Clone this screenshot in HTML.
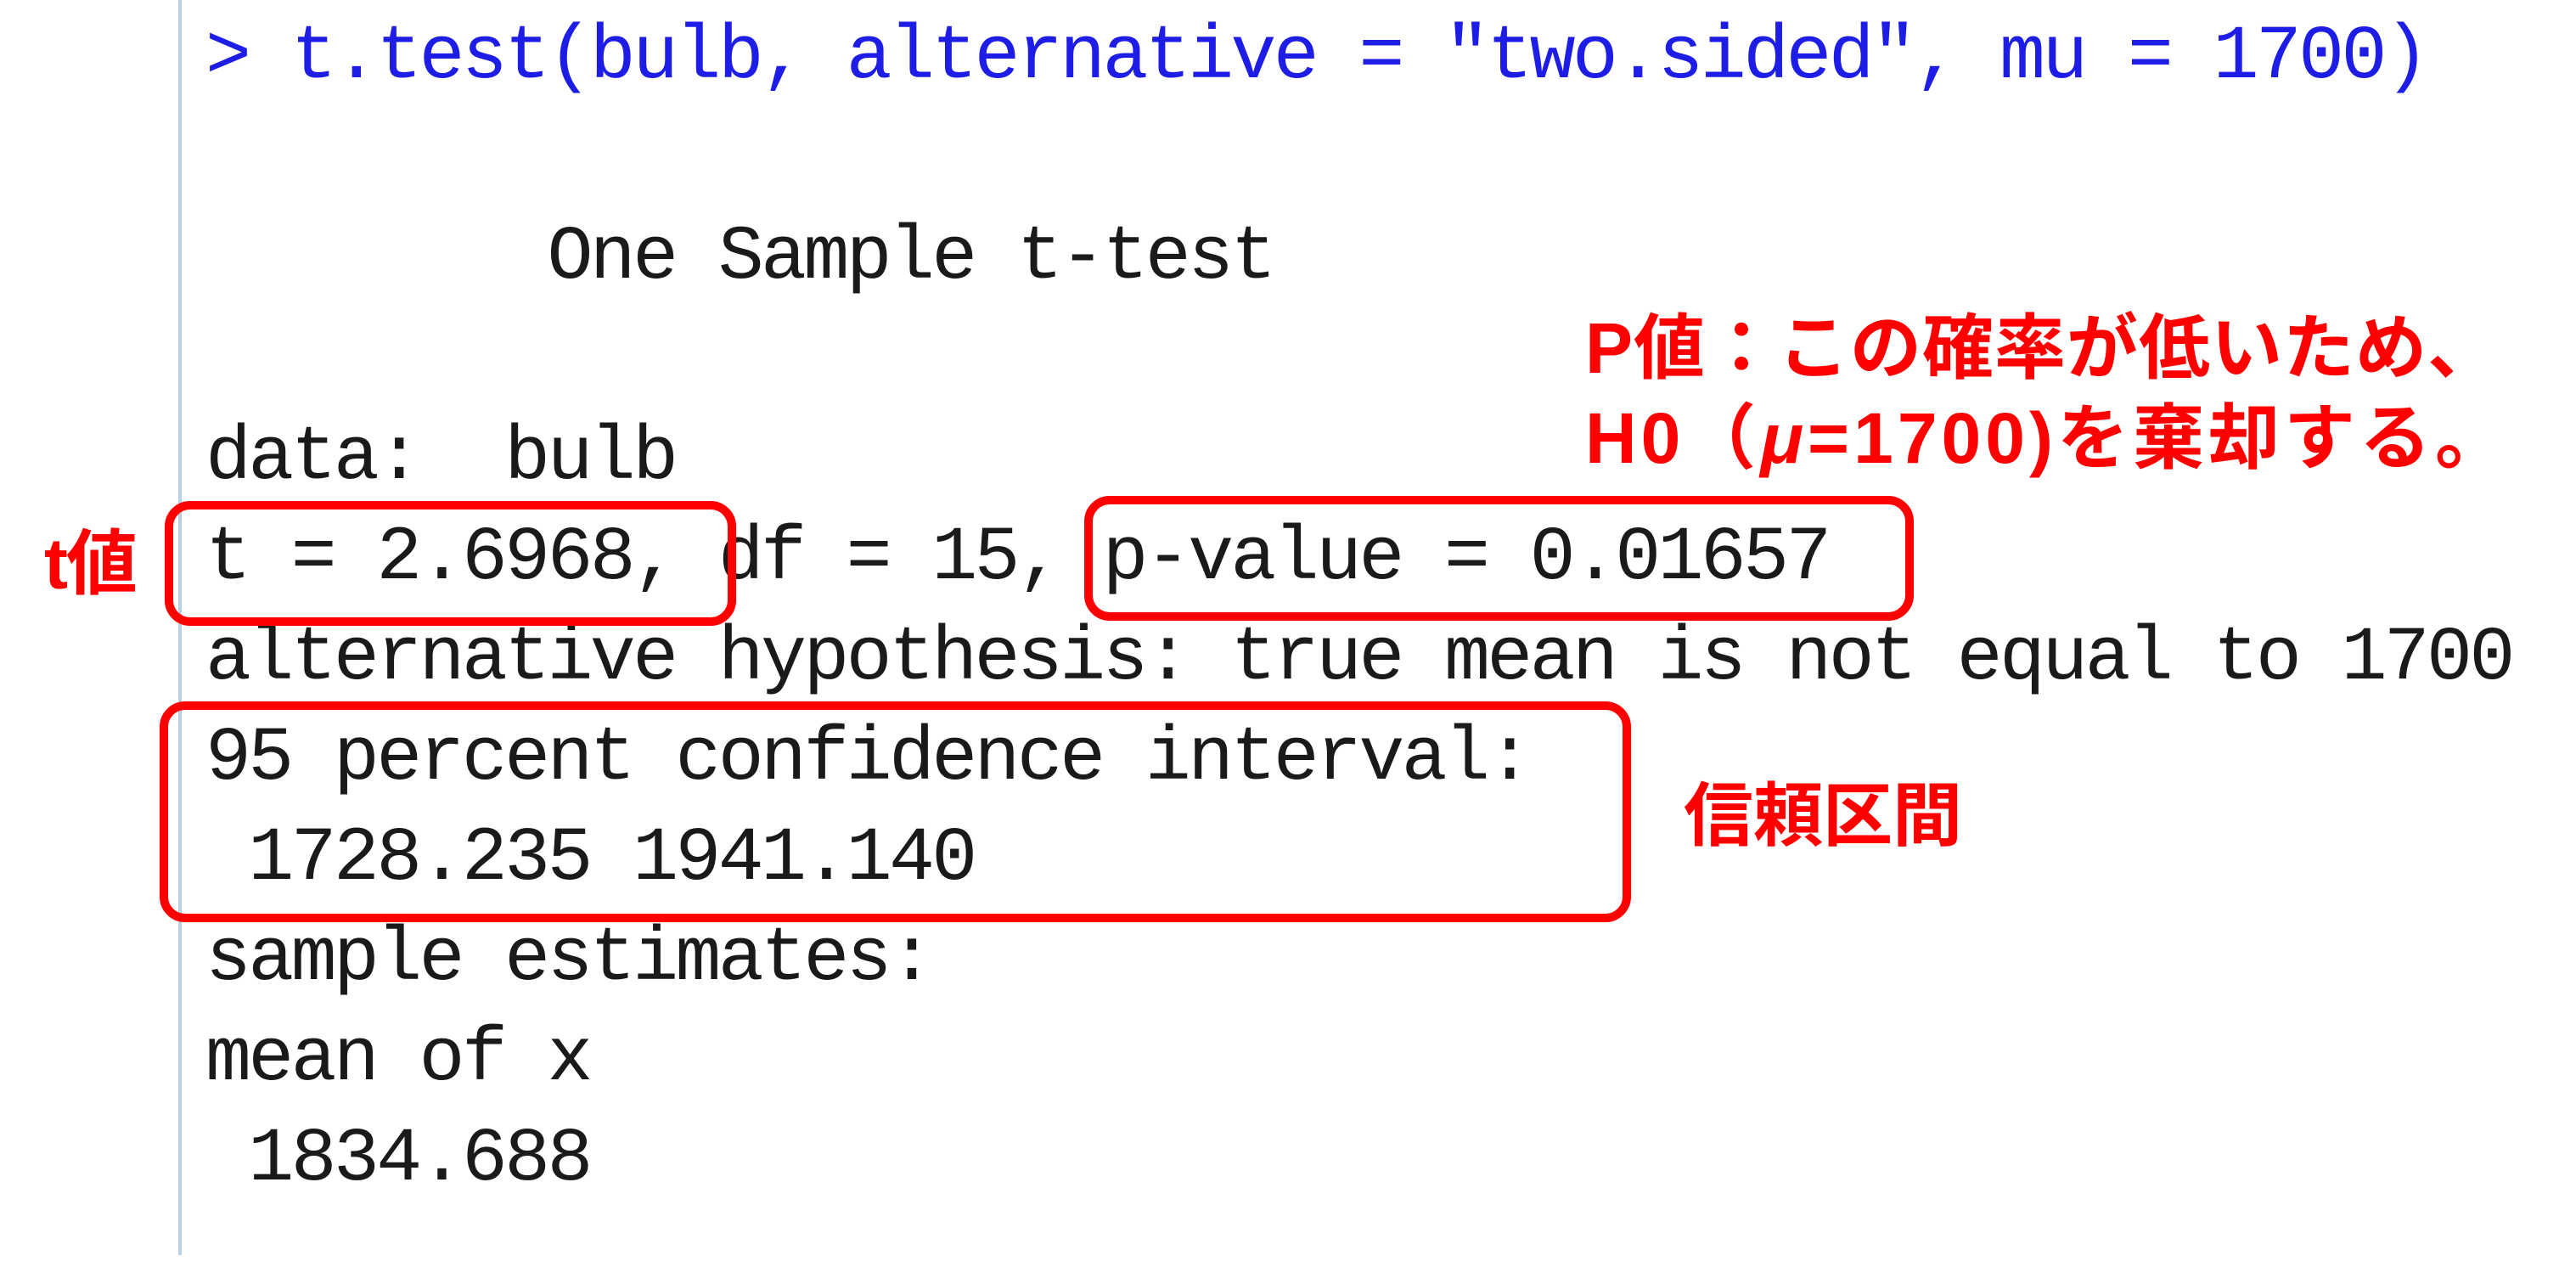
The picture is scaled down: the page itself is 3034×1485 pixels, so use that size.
<!DOCTYPE html>
<html><head><meta charset="utf-8"><style>
html,body{margin:0;padding:0;background:#fff;}
body{width:3034px;height:1485px;position:relative;overflow:hidden;}
.vl{position:absolute;left:210px;top:0;width:4px;height:1478px;background:#b9d0e3;}
.ln{position:absolute;left:242px;height:118px;line-height:118px;font-family:"Liberation Mono",monospace;font-size:90px;letter-spacing:-3.7px;color:#1a1a1a;white-space:pre;}
.blue{color:#1d1de6;}
.red{position:absolute;font-family:"Liberation Sans","Noto Sans CJK JP",sans-serif;font-weight:bold;color:#f00;white-space:pre;}
.box{position:absolute;border:10px solid #f00;border-radius:30px;box-sizing:border-box;}
</style></head><body>
<div class="vl"></div>
<div class="ln blue" style="top:9px">&gt; t.test(bulb, alternative = "two.sided", mu = 1700)</div>
<div class="ln" style="top:245px">        One Sample t-test</div>
<div class="ln" style="top:481px">data:  bulb</div>
<div class="ln" style="top:599px">t = 2.6968, df = 15, p-value = 0.01657</div>
<div class="ln" style="top:717px">alternative hypothesis: true mean is not equal to 1700</div>
<div class="ln" style="top:835px">95 percent confidence interval:</div>
<div class="ln" style="top:953px"> 1728.235 1941.140</div>
<div class="ln" style="top:1071px">sample estimates:</div>
<div class="ln" style="top:1189px">mean of x</div>
<div class="ln" style="top:1307px"> 1834.688</div>
<div class="box" style="left:194px;top:590px;width:673px;height:147px"></div>
<div class="box" style="left:1277px;top:584px;width:977px;height:147px"></div>
<div class="box" style="left:188px;top:826px;width:1733px;height:260px"></div>
<div class="red" style="left:52px;top:616px;font-size:84px;line-height:96px;letter-spacing:-2px">t値</div>
<div class="red" style="left:1867px;top:360px;font-size:84px;line-height:100px;letter-spacing:1px">P値：この確率が低いため、</div>
<div class="red" style="left:1867px;top:466px;font-size:84px;line-height:100px;letter-spacing:5px">H0（<i>μ</i>=1700)を棄却する。</div>
<div class="red" style="left:1983px;top:914px;font-size:82px;line-height:96px">信頼区間</div>
</body></html>
